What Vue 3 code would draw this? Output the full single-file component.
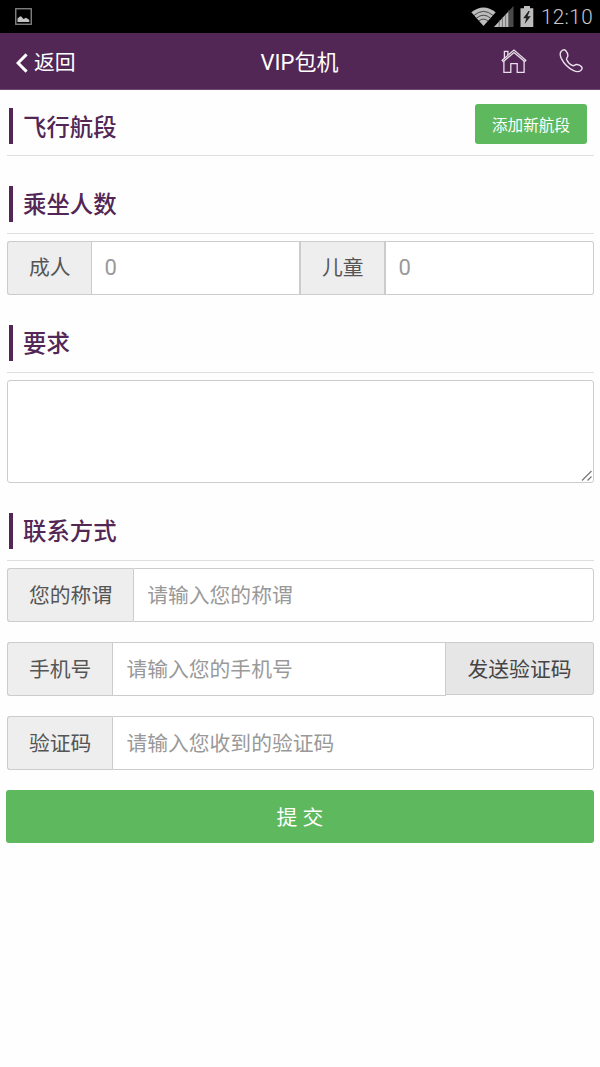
<script setup>
import { ref, reactive } from 'vue'

const form = reactive({
  adult: '',
  child: '',
  demand: '',
  name: '',
  phone: '',
  code: ''
})

const time = ref('12:10')
</script>

<template>
  <div class="page">
    <div class="status-bar">
      <svg class="status-picture" width="17" height="17" viewBox="0 0 17 17">
        <rect x="0.75" y="0.75" width="15.5" height="15.5" fill="none" stroke="#8a8a8a" stroke-width="1.3" />
        <path d="M2.5 14V10.5L5 8.5L6 8.2L8.5 11L11 9.8L13 11L14.3 12V14Z" fill="#c4c4c4" />
      </svg>
      <div class="status-right">
        <svg width="25" height="19" viewBox="0 0 25 19">
          <path d="M0.3 5.3Q12.5 -4.5 24.7 5.3L12.5 19Z" fill="#bdbdbd" />
          <path d="M3 8.4Q12.5 0.4 22 8.4M5.4 11.2Q12.5 5.2 19.6 11.2M7.9 14Q12.5 10.2 17.1 14" fill="none" stroke="#3a3a3a" stroke-width="0.9" />
        </svg>
        <svg class="signal" width="20" height="21" viewBox="0 0 20 21">
          <path d="M19.5 0V21H0Z" fill="#4a4a4a" />
          <path d="M14.5 5.4V21H0Z" fill="#bdbdbd" />
          <path d="M5.2 14V21M8.4 11V21M11.6 8V21M14.8 4V21" stroke="#555" stroke-width="0.7" />
        </svg>
        <svg class="battery" width="14" height="21" viewBox="0 0 14 21">
          <path d="M4 0H10V2.3H13.3V21H0.5V2.3H4Z" fill="#bdbdbd" />
          <path d="M8.5 5L3.2 12.2H6.2L4.6 18L10.8 10.2H7.6L9.8 5Z" fill="#222" />
        </svg>
        <span class="clock">{{ time }}</span>
      </div>
    </div>

    <header class="nav">
      <a class="back">
        <svg width="12" height="20" viewBox="0 0 12 20">
          <path d="M10.6 1.4L2 10L10.6 18.6" fill="none" stroke="#fff" stroke-width="3" />
        </svg>
        <span>返回</span>
      </a>
      <h1>VIP包机</h1>
      <div class="nav-icons">
        <svg width="26" height="26" viewBox="0 0 26 26" fill="none" stroke="#eadfea" stroke-width="1.3">
          <path d="M1.2 12.3L13 2L24.8 12.3L23.7 13.6L13 4.6L2.3 13.6Z" />
          <path d="M2.9 13V24.4H9.8V15.7H16.2V24.4H23.1V13" />
          <path d="M3.4 10V3.4H6.9V7" />
        </svg>
        <svg width="24" height="24" viewBox="0 0 24 24" fill="none" stroke="#eadfea" stroke-width="1.4">
          <path d="M2.3 2.2C3.8 0.8 5.7 0.6 6.8 1.7C8.2 3.2 9 5.6 8.8 7.1C8.6 8.6 7.1 9 7.6 10.5C8.5 12.7 11.5 15.8 13.7 16.7C15.2 17.2 15.9 15.6 17.4 15.5C19 15.4 21.4 16.4 22.5 17.8C23.4 18.9 23 20.4 21.8 21.5C19.9 23.1 17.3 23 14.2 21.4C9.2 18.9 4.6 14 2.3 9.4C0.9 6.4 0.9 3.7 2.3 2.2Z" />
        </svg>
      </div>
    </header>

    <main class="content">
      <div class="section-title first">
        <h2>飞行航段</h2>
        <button class="btn-add">添加新航段</button>
      </div>

      <div class="section-title">
        <h2>乘坐人数</h2>
      </div>
      <div class="input-group people">
        <span class="addon">成人</span>
        <input v-model="form.adult" type="text" placeholder="0">
        <span class="addon middle">儿童</span>
        <input v-model="form.child" class="child" type="text" placeholder="0">
      </div>

      <div class="section-title">
        <h2>要求</h2>
      </div>
      <div class="textarea-box">
        <textarea v-model="form.demand"></textarea>
        <svg class="grip" width="12" height="12" viewBox="0 0 12 12">
          <path d="M1 10.5L10.5 1M6.5 10.5L10.5 6.5" stroke="#777" stroke-width="1.2" />
        </svg>
      </div>

      <div class="section-title">
        <h2>联系方式</h2>
      </div>
      <div class="input-group">
        <span class="addon">您的称谓</span>
        <input v-model="form.name" type="text" placeholder="请输入您的称谓">
      </div>
      <div class="input-group phone">
        <span class="addon">手机号</span>
        <input v-model="form.phone" type="text" placeholder="请输入您的手机号">
        <button class="btn-code">发送验证码</button>
      </div>
      <div class="input-group">
        <span class="addon">验证码</span>
        <input v-model="form.code" type="text" placeholder="请输入您收到的验证码">
      </div>
      <button class="btn-submit">提 交</button>
    </main>
  </div>
</template>

<style>
body {
  margin: 0;
  background: #fefefe;
}
</style>

<style scoped>
.page {
  min-height: 1067px;
  background: #fefefe;
  font-family: Roboto, "Noto Sans CJK SC", sans-serif;
  font-size: 20.8px;
  color: #555;
}

.page * {
  box-sizing: border-box;
}

button,
input,
textarea {
  font-family: inherit;
  font-size: inherit;
  margin: 0;
}

.status-bar {
  height: 33px;
  padding: 0 7px 0 15px;
  background: #000;
  display: flex;
  align-items: center;
  justify-content: space-between;
}

.status-right {
  display: flex;
  align-items: center;
}

.signal {
  margin-left: -2px;
}

.battery {
  margin-left: 6px;
}

.clock {
  margin-left: 7px;
  padding-top: 1px;
  font-size: 20.6px;
  letter-spacing: 0.4px;
  line-height: 32px;
  font-weight: 300;
  color: #c8c8c8;
}

.nav {
  height: 57px;
  padding: 0 17px 0 16px;
  background: #522655;
  border-bottom: 1px solid #6e4a70;
  color: #fff;
  display: grid;
  grid-template-columns: 1fr auto 1fr;
  align-items: center;
}

.back {
  display: flex;
  align-items: center;
  gap: 6px;
}

.back span {
  padding-top: 4px;
  line-height: 52px;
}

.back svg {
  margin-top: 4px;
}

.nav h1 {
  margin: 0;
  padding-top: 3px;
  font-size: 22px;
  line-height: 53px;
  font-weight: 400;
}

.nav-icons {
  display: flex;
  align-items: center;
  justify-content: flex-end;
  gap: 32px;
}

.content {
  padding: 0 6px 0 7px;
}

.section-title {
  height: 48px;
  margin: 30px 0 7px;
  padding: 0 7px 11px 2px;
  border-bottom: 1px solid #dedede;
  display: flex;
  align-items: flex-end;
  justify-content: space-between;
}

.section-title h2 {
  margin: 0;
  height: 36px;
  padding-left: 10px;
  border-left: 4px solid #522655;
  color: #522655;
  font-size: 23.4px;
  font-weight: 500;
  line-height: 39px;
}

.section-title.first {
  height: 66px;
  margin: 0;
}

.section-title.first h2 {
  line-height: 40px;
}

.btn-add {
  width: 112px;
  height: 40px;
  padding: 0;
  border: 0;
  border-radius: 3px;
  background: #5eb85e;
  color: #fff;
  font-size: 15.6px;
}

.input-group {
  height: 54px;
  margin-bottom: 20px;
  display: flex;
}

.addon {
  padding: 0 21px;
  border: 1px solid #ccc;
  border-right: 0;
  border-radius: 3px 0 0 3px;
  background: #eee;
  line-height: 54px;
  white-space: nowrap;
}

.addon.middle {
  border-radius: 0;
}

.input-group input {
  flex: 1;
  min-width: 0;
  padding: 2px 13px 0;
  border: 1px solid #ccc;
  border-radius: 0 3px 3px 0;
  background: #fff;
  color: #555;
  outline: none;
}

.input-group input::placeholder {
  color: #999;
  opacity: 1;
}

.people .addon {
  padding-right: 20px;
  line-height: 53px;
}

.people input {
  padding: 0 13px 2px;
  border-radius: 0;
  font-size: 22px;
}

.people .child {
  border-left-width: 2px;
  border-radius: 0 3px 3px 0;
}

.textarea-box {
  position: relative;
  height: 103px;
}

.textarea-box textarea {
  display: block;
  width: 100%;
  height: 103px;
  padding: 10px 13px;
  border: 1px solid #ccc;
  border-radius: 3px;
  background: #fff;
  resize: none;
  outline: none;
}

.grip {
  position: absolute;
  right: 1px;
  bottom: 1px;
}

.phone input {
  border-radius: 0;
}

.btn-code {
  width: 148px;
  height: 53px;
  padding: 0 0 1px;
  border: 1px solid #ccc;
  border-left: 0;
  border-radius: 0 3px 3px 0;
  background: #e6e6e6;
  color: #444;
}

.btn-submit {
  display: block;
  width: calc(100% + 1px);
  height: 53px;
  margin-left: -1px;
  padding: 0 0 1px;
  border: 0;
  border-radius: 3px;
  background: #5eb85e;
  color: #fff;
}
</style>
